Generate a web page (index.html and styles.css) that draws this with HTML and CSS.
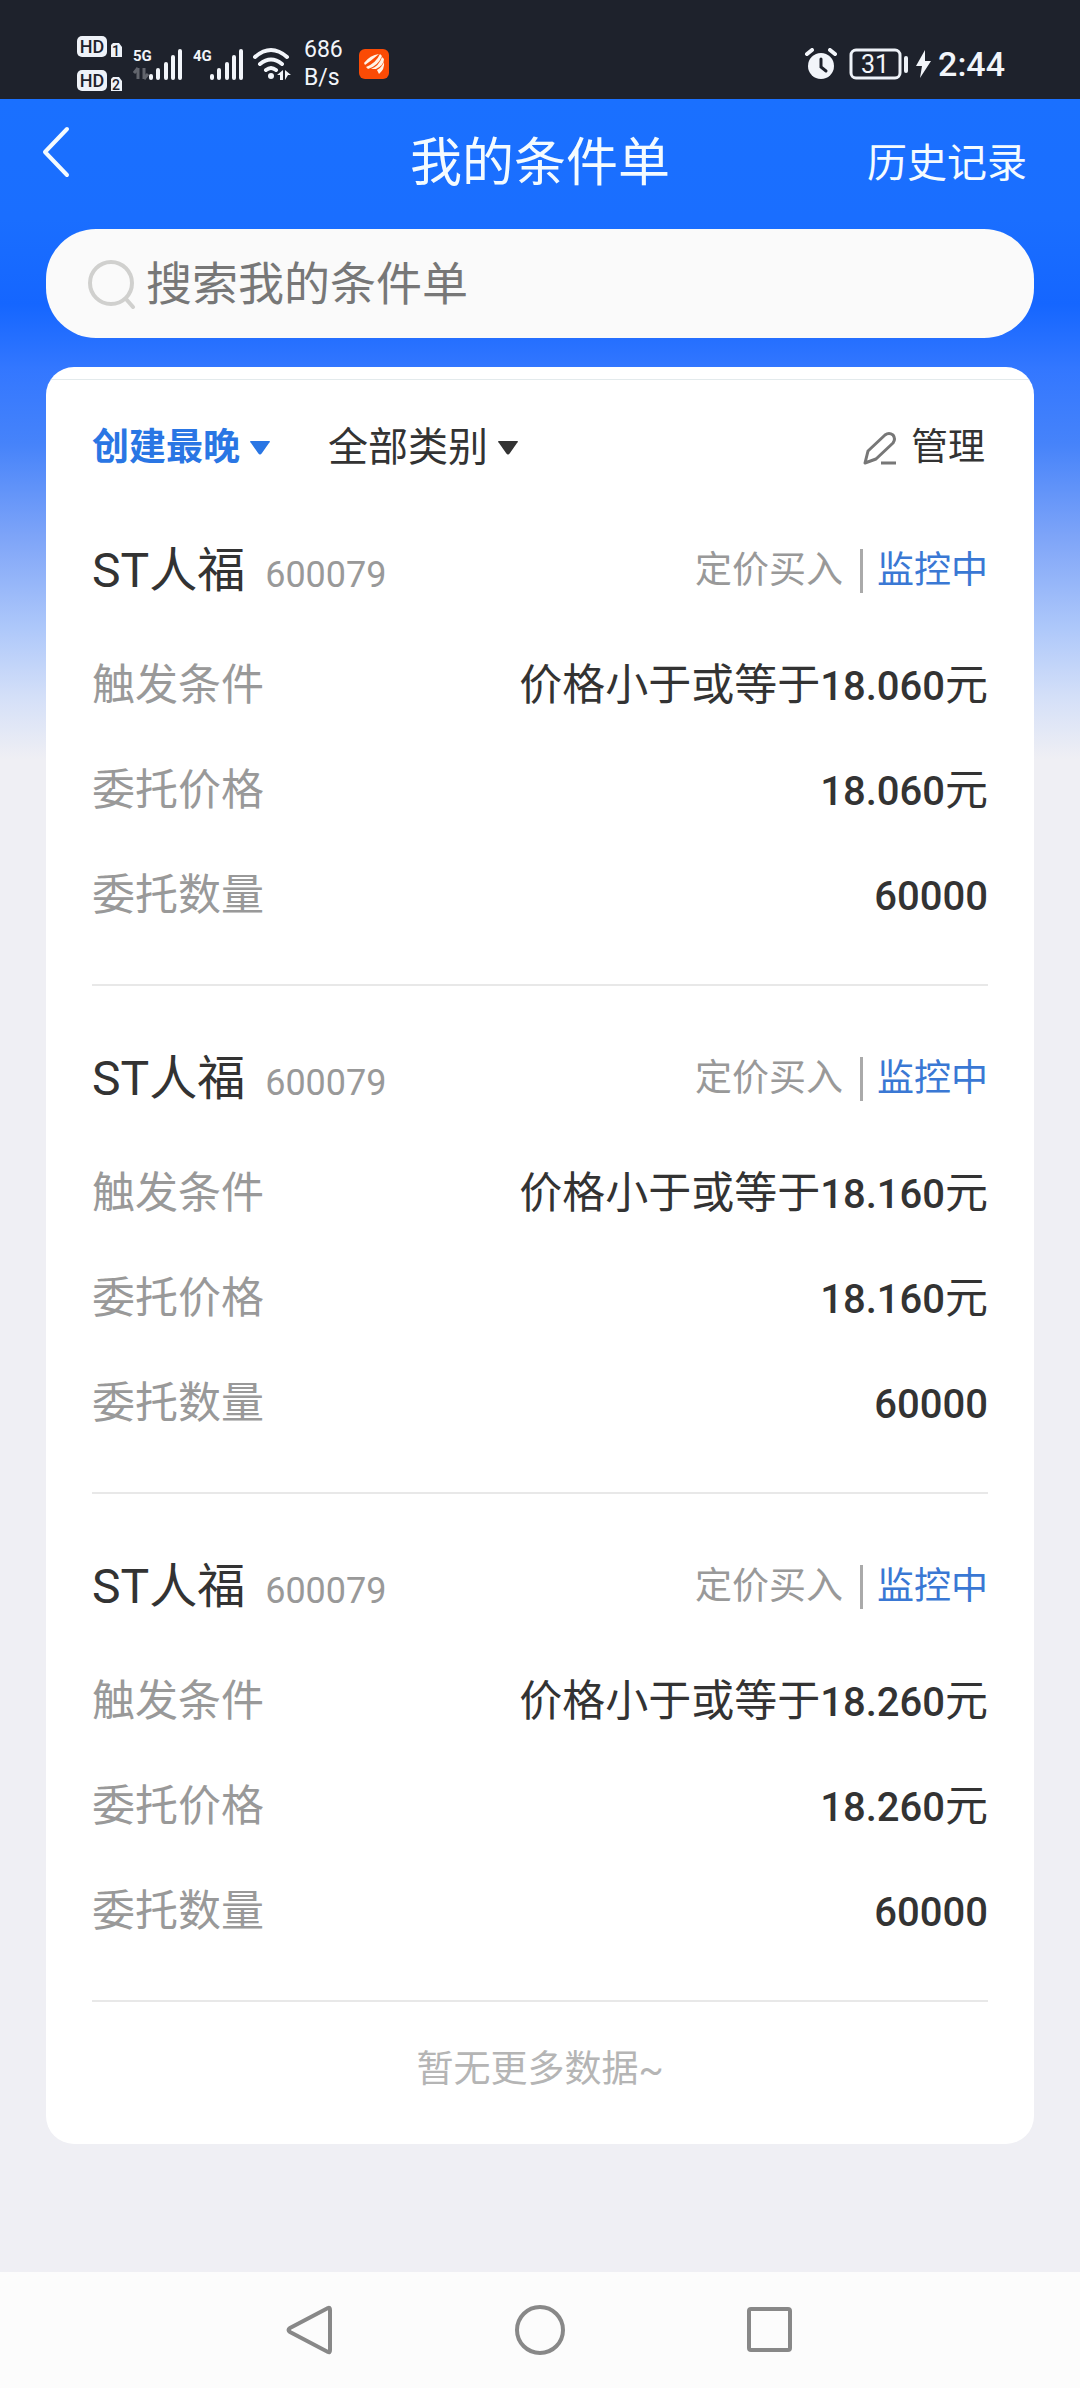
FILE: index.html
```html
<!DOCTYPE html>
<html lang="zh-CN">
<head>
  <meta charset="UTF-8" />
  <meta name="viewport" content="width=device-width, initial-scale=1.0"/>
  <title>我的条件单</title>
  <link rel="stylesheet" href="styles.css">
</head>
<body>

  <!-- Status bar -->
  <div class="status-bar">
    <div class="status-left">
      <svg class="icon-hd" width="46" height="56" viewBox="0 0 46 56">
        <g fill="#eef2f8">
          <rect x="0" y="0" width="30" height="21" rx="5"/>
          <rect x="0" y="34" width="30" height="21" rx="5"/>
          <path d="M36 7h6l3 4v10H34V9zM36 41h6l3 4v10H34V43z"/>
        </g>
        <g fill="#1e222c" font-family="Roboto, sans-serif" font-weight="500" text-anchor="middle">
          <text x="15" y="17" font-size="18">HD</text>
          <text x="15" y="51" font-size="18">HD</text>
          <text x="39" y="20" font-size="14">1</text>
          <text x="39" y="54" font-size="14">2</text>
        </g>
      </svg>

      <svg class="icon-5g" width="50" height="34" viewBox="0 0 50 34" fill="#f2f5fa">
        <text x="0" y="14" font-family="Roboto, sans-serif" font-weight="700" font-size="15">5G</text>
        <path d="M5 21v11M5 21l-4 5M11 32V21M11 32l4-5" fill="none" stroke="#62656d" stroke-width="3"/>
        <rect x="16" y="27" width="4" height="6" rx="2"/>
        <rect x="23" y="21" width="4" height="12" rx="2"/>
        <rect x="31" y="15" width="4" height="18" rx="2"/>
        <rect x="38" y="8" width="4" height="25" rx="2"/>
        <rect x="45" y="2" width="4" height="31" rx="2"/>
      </svg>

      <svg class="icon-4g" width="50" height="34" viewBox="0 0 50 34" fill="#f2f5fa">
        <text x="0" y="14" font-family="Roboto, sans-serif" font-weight="700" font-size="15">4G</text>
        <rect x="17" y="27" width="4" height="6" rx="2"/>
        <rect x="24" y="21" width="4" height="12" rx="2"/>
        <rect x="32" y="15" width="4" height="18" rx="2"/>
        <rect x="39" y="8" width="4" height="25" rx="2"/>
        <rect x="46" y="2" width="4" height="31" rx="2"/>
      </svg>

      <svg class="icon-wifi" width="38" height="34" viewBox="0 0 38 34" fill="none" stroke="#f2f5fa" stroke-linecap="round">
        <path d="M2 10q16-14 32 0M7 17q11-9 22 0M13 23q5-4 10 0" stroke-width="4"/>
        <circle cx="18" cy="29" r="3" fill="#f2f5fa" stroke="none"/>
        <path d="M30 23v10h-3v-5h-3zM32 33V23l6 5h-3z" fill="#f2f5fa" stroke="none"/>
      </svg>

      <div class="net-speed">686<br>B/s</div>

      <svg class="icon-app" width="30" height="30" viewBox="0 0 30 30">
        <rect width="30" height="30" rx="6" fill="#fa4b05"/>
        <path d="M5 14Q11 6 20 5Q13 11 6 16zM7 18Q17 14 21 5L23 7Q19 17 9 20zM12 20Q20 17 23 8L25 10Q25 16 17 20zM18 21Q23 18 25 13Q26 20 20 25z" fill="#fff3e6"/>
      </svg>
    </div>

    <div class="status-right">
      <svg class="icon-alarm" width="34" height="32" viewBox="0 0 34 32">
        <circle cx="17" cy="18" r="13" fill="#f2f5fa"/>
        <path d="M3 6l5-4M31 6l-5-4" stroke="#f2f5fa" stroke-width="4" stroke-linecap="round"/>
        <path d="M17 11v8l5 4" fill="none" stroke="#1e222c" stroke-width="3" stroke-linecap="round"/>
      </svg>
      <svg class="icon-battery" width="60" height="32" viewBox="0 0 60 32">
        <rect x="2" y="2" width="49" height="28" rx="5" fill="none" stroke="#eef2f8" stroke-width="3"/>
        <rect x="55" y="8" width="4" height="17" rx="2" fill="#eef2f8"/>
        <text x="26" y="25" font-family="Roboto, sans-serif" font-size="25" text-anchor="middle" fill="#f2f5fa">31</text>
      </svg>
      <svg class="icon-bolt" width="15" height="28" viewBox="0 0 15 28" fill="#f2f5fa">
        <path d="M9 0L0 16h6L4 28L15 11H9z"/>
      </svg>
      <span class="clock">2:44</span>
    </div>
  </div>

  <main class="page">
    <header class="top-bar">
      <button class="back-button" aria-label="返回">
        <svg width="28" height="52" viewBox="0 0 28 52" fill="none" stroke="#f4fbff" stroke-width="4" stroke-linecap="round" stroke-linejoin="round">
          <path d="M25 3L3 26l22 23"/>
        </svg>
      </button>
      <h1>我的条件单</h1>
      <a class="history-link" href="#history">历史记录</a>
    </header>

    <label class="search-box">
      <svg width="48" height="50" viewBox="0 0 48 50" fill="none" stroke="#d0d0ce" stroke-width="4" stroke-linecap="round">
        <circle cx="23" cy="24" r="21"/>
        <path d="M38 40l7 8"/>
      </svg>
      <input type="search" placeholder="搜索我的条件单" aria-label="搜索我的条件单">
    </label>

    <section class="card">
      <div class="filter-bar">
        <label class="filter active">
          <select aria-label="排序">
            <option>创建最晚</option>
            <option>创建最早</option>
          </select>
          <svg width="20" height="14" viewBox="0 0 20 14" fill="currentColor"><path d="M1 0h18q2 0 0 2l-7 10q-2 3-4 0L1 2q-2-2 0-2z"/></svg>
        </label>
        <label class="filter">
          <select aria-label="类别">
            <option>全部类别</option>
            <option>定价买入</option>
          </select>
          <svg width="20" height="14" viewBox="0 0 20 14" fill="currentColor"><path d="M1 0h18q2 0 0 2l-7 10q-2 3-4 0L1 2q-2-2 0-2z"/></svg>
        </label>
        <button class="manage-button">
          <svg width="34" height="34" viewBox="0 0 34 34" fill="none" stroke="#777" stroke-width="3" stroke-linejoin="round">
            <path d="M2 32L5 20L22 4Q26 1 30 4Q33 8 30 12L13 28z"/>
            <path d="M18 32h15"/>
          </svg>
          管理
        </button>
      </div>

      <article class="order">
        <div class="order-head">
          <h2>ST人福</h2>
          <span class="code">600079</span>
          <span class="type">定价买入</span>
          <span class="state">监控中</span>
        </div>
        <dl class="order-info">
          <div><dt>触发条件</dt><dd>价格小于或等于<b>18.060</b>元</dd></div>
          <div><dt>委托价格</dt><dd><b>18.060</b>元</dd></div>
          <div><dt>委托数量</dt><dd><b>60000</b></dd></div>
        </dl>
      </article>

      <article class="order">
        <div class="order-head">
          <h2>ST人福</h2>
          <span class="code">600079</span>
          <span class="type">定价买入</span>
          <span class="state">监控中</span>
        </div>
        <dl class="order-info">
          <div><dt>触发条件</dt><dd>价格小于或等于<b>18.160</b>元</dd></div>
          <div><dt>委托价格</dt><dd><b>18.160</b>元</dd></div>
          <div><dt>委托数量</dt><dd><b>60000</b></dd></div>
        </dl>
      </article>

      <article class="order">
        <div class="order-head">
          <h2>ST人福</h2>
          <span class="code">600079</span>
          <span class="type">定价买入</span>
          <span class="state">监控中</span>
        </div>
        <dl class="order-info">
          <div><dt>触发条件</dt><dd>价格小于或等于<b>18.260</b>元</dd></div>
          <div><dt>委托价格</dt><dd><b>18.260</b>元</dd></div>
          <div><dt>委托数量</dt><dd><b>60000</b></dd></div>
        </dl>
      </article>

      <p class="no-more">暂无更多数据~</p>
    </section>
  </main>

  <!-- System navigation -->
  <nav class="nav-bar">
    <button aria-label="返回">
      <svg width="52" height="52" viewBox="0 0 52 52"><path d="M44 4Q46 3 46 6v40q0 3-2 2L6 28q-3-2 0-4z"/></svg>
    </button>
    <button aria-label="主页">
      <svg width="52" height="52" viewBox="0 0 52 52"><circle cx="26" cy="26" r="23"/></svg>
    </button>
    <button aria-label="最近任务">
      <svg width="52" height="52" viewBox="0 0 52 52"><rect x="5" y="5" width="41" height="41" rx="2"/></svg>
    </button>
  </nav>

</body>
</html>
```

FILE: styles.css
```css
*, *::before, *::after {
  box-sizing: border-box;
}

body {
  margin: 0;
  min-height: 100vh;
  display: flex;
  flex-direction: column;
  background: #efeff4;
  color: #333;
  font-family: Roboto, "Noto Sans CJK SC", sans-serif;
}

svg {
  display: block;
  flex-shrink: 0;
}

button, input, select {
  margin: 0;
  padding: 0;
  border: none;
  background: none;
  color: inherit;
  font: inherit;
}

button {
  cursor: pointer;
}

h1, h2, dl, dd, p {
  margin: 0;
  font-weight: 400;
}

/* status bar */
.status-bar {
  height: 99px;
  padding: 29px 75px 0 77px;
  display: flex;
  justify-content: space-between;
  background: #1e222c;
  color: #f2f5fa;
}

.status-left, .status-right {
  display: flex;
  align-items: center;
}

.status-left {
  gap: 10px;
}

.status-right {
  gap: 7px;
}

.icon-battery {
  margin-left: 4px;
}

.net-speed {
  margin-left: 3px;
  font-size: 23px;
  line-height: 28px;
}

.icon-app {
  margin-left: 6px;
}

.clock {
  font-size: 34px;
  font-weight: 500;
}

/* page */
.page {
  padding: 0 46px 40px;
  background: linear-gradient(#1a70ff 0, #1a6eff 120px, #1566ff 205px, #3377ff 270px, #4683fa 345px, #7fa5f8 440px, #aec8fa 530px, #d5e0f8 600px, #efeff4 660px);
}

.top-bar {
  height: 130px;
  display: grid;
  grid-template-columns: 1fr auto 1fr;
  align-items: center;
  color: #f4fbff;
  line-height: 60px;
}

.back-button {
  justify-self: start;
  margin-left: -4px;
  padding-bottom: 24px;
}

h1 {
  font-size: 52px;
}

.history-link {
  justify-self: end;
  margin-right: 7px;
  font-size: 40px;
  color: inherit;
  text-decoration: none;
}

.search-box {
  height: 109px;
  margin-bottom: 29px;
  padding: 0 42px;
  display: flex;
  align-items: center;
  gap: 10px;
  border-radius: 50px;
  background: #fafafa;
}

.search-box input {
  flex: 1;
  min-width: 0;
  outline: none;
  font-size: 46px;
}

.search-box input::placeholder {
  color: #777;
  opacity: 1;
}

.card {
  padding-top: 12px;
  border-radius: 28px;
  background: #fff;
  overflow: hidden;
}

.filter-bar {
  padding: 38px 46px 0;
  border-top: 1px solid #e3eaec;
  display: flex;
  align-items: center;
  gap: 58px;
  line-height: 60px;
}

.filter {
  display: flex;
  align-items: center;
  gap: 10px;
  font-size: 40px;
}

.filter.active {
  color: #2a76e4;
  font-size: 37px;
  font-weight: 700;
}

.filter select {
  appearance: none;
  height: 60px;
  cursor: pointer;
}

.filter option {
  color: #333;
  font-weight: 400;
}

.manage-button {
  margin-left: auto;
  margin-right: 3px;
  display: flex;
  align-items: center;
  gap: 14px;
  font-size: 37px;
}

.order {
  margin: 0 46px;
  padding: 63px 0 59px;
  border-bottom: 2px solid #e8e8e8;
}

.order-head {
  display: flex;
  align-items: center;
  height: 60px;
  font-size: 37px;
  line-height: 44px;
}

h2 {
  font-size: 48px;
}

.code {
  margin-left: 20px;
  padding-top: 8px;
  font-size: 36px;
  color: #999;
}

.type {
  margin-left: auto;
  color: #999;
}

.state {
  margin-left: 17px;
  padding-left: 14px;
  border-left: 3px solid #aaa;
  color: #3a78d4;
}

.order-info {
  margin-top: 54px;
  display: flex;
  flex-direction: column;
  gap: 45px;
  font-size: 43px;
  line-height: 60px;
}

.order-info div {
  height: 60px;
  display: flex;
  justify-content: space-between;
}

dt {
  color: #999;
}

dd b {
  font-size: 40px;
  font-weight: 500;
}

.no-more {
  padding: 38px 0 44px;
  text-align: center;
  font-size: 37px;
  line-height: 60px;
  color: #b5b5b5;
}

/* system navigation */
.nav-bar {
  margin-top: auto;
  height: 116px;
  display: flex;
  justify-content: center;
  align-items: center;
  gap: 178px;
  background: #fcfcfc;
}

.nav-bar svg {
  fill: none;
  stroke: #888;
  stroke-width: 4;
}
```
